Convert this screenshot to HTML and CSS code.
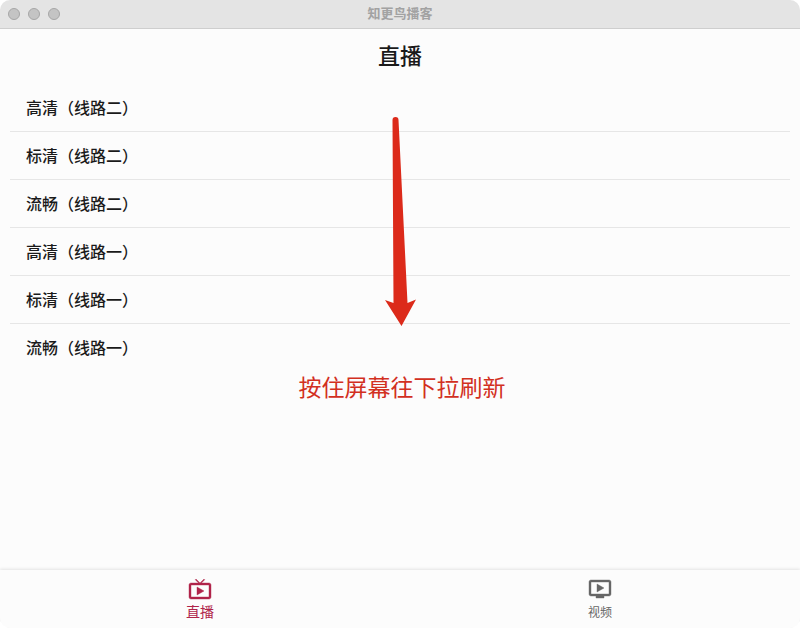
FILE: index.html
```html
<!DOCTYPE html>
<html lang="zh-CN">
<head>
  <meta charset="UTF-8">
  <meta name="viewport" content="width=device-width, initial-scale=1">
  <title>知更鸟播客</title>
  <link rel="stylesheet" href="styles.css">
</head>
<body>

  <div class="window">
    <header class="titlebar">
      <div class="window-buttons">
        <button type="button" class="dot" aria-label="关闭"></button>
        <button type="button" class="dot" aria-label="最小化"></button>
        <button type="button" class="dot" aria-label="缩放"></button>
      </div>
      <span class="window-title">知更鸟播客</span>
    </header>

    <main class="content">
      <h1 class="page-title">直播</h1>

      <ul class="channel-list">
        <li><a href="#" class="channel">高清（线路二）</a></li>
        <li><a href="#" class="channel">标清（线路二）</a></li>
        <li><a href="#" class="channel">流畅（线路二）</a></li>
        <li><a href="#" class="channel">高清（线路一）</a></li>
        <li><a href="#" class="channel">标清（线路一）</a></li>
        <li><a href="#" class="channel">流畅（线路一）</a></li>
      </ul>

      <svg class="pull-arrow" viewBox="0 0 32 210" aria-hidden="true">
        <path d="M8.500 4 Q8.500 1 11.500 1 Q14.500 1 14.500 4 L23.500 187 L32 183.500 L17.500 210 L1 184 L9.500 187 Z"/>
      </svg>
      <p class="pull-hint">按住屏幕往下拉刷新</p>
    </main>

    <nav class="tabbar">
      <a href="#" class="tab active">
        <svg class="tab-icon" viewBox="0 0 24 24" aria-hidden="true">
          <path d="M21 6h-7.590l3.290-3.290L16 2l-4 4-4-4-.71.71L10.590 6H3c-1.100 0-2 .89-2 2v12c0 1.100.9 2 2 2h18c1.100 0 2-.9 2-2V8c0-1.110-.9-2-2-2zm0 14H3V8h18v12zM9 10v8l7-4z"/>
        </svg>
        <span class="tab-label">直播</span>
      </a>
      <a href="#" class="tab">
        <svg class="tab-icon" viewBox="0 0 24 24" aria-hidden="true">
          <path d="M21 3H3c-1.110 0-2 .89-2 2v12c0 1.100.89 2 2 2h5v2h8v-2h5c1.100 0 1.990-.9 1.990-2L23 5c0-1.100-.9-2-2-2zm0 14H3V5h18v12zm-5-6l-7 4V7z"/>
        </svg>
        <span class="tab-label">视频</span>
      </a>
    </nav>
  </div>

</body>
</html>
```

FILE: styles.css
```css
* {
  box-sizing: border-box;
}

html, body {
  margin: 0;
  padding: 0;
  background: #fff;
  font-family: "Noto Sans CJK SC", "Noto Sans", sans-serif;
}

a {
  color: inherit;
  text-decoration: none;
}

.window {
  display: flex;
  flex-direction: column;
  min-height: 100vh;
  background: #fcfcfc;
  border-radius: 10px;
  overflow: hidden;
}

/* title bar */
.titlebar {
  display: grid;
  grid-template-columns: 1fr auto 1fr;
  align-items: center;
  height: 29px;
  padding: 0 8px;
  background: #e4e4e4;
  border-bottom: 1px solid #cecece;
}
.window-buttons {
  display: flex;
  gap: 8px;
}
.dot {
  width: 12px;
  height: 12px;
  padding: 0;
  border: 1px solid #a6a6a6;
  border-radius: 50%;
  background: #c4c4c4;
}
.window-title {
  padding-bottom: 2px;
  font-size: 13px;
  line-height: 20px;
  font-weight: 700;
  color: #a2a2a2;
}

/* channel list */
.content {
  position: relative;
  flex: 1;
}
.page-title {
  margin: 0;
  padding: 9px 0 14px;
  font-size: 22px;
  line-height: 32px;
  font-weight: 500;
  text-align: center;
  color: #1a1a1a;
}
.channel-list {
  list-style: none;
  margin: 0;
  padding: 0 10px;
}
.channel-list li + li {
  border-top: 1px solid #e6e6e6;
}
.channel {
  display: block;
  padding: 12px 16px;
  font-size: 16px;
  line-height: 23px;
  font-weight: 500;
  color: #1a1a1a;
}

/* pull to refresh */
.pull-arrow {
  position: absolute;
  top: 87px;
  left: 50%;
  width: 32px;
  height: 210px;
  margin-left: -16px;
  fill: #dc2a1a;
}
.pull-hint {
  margin: 0;
  padding-left: 4px;
  font-size: 23px;
  line-height: 30px;
  text-align: center;
  color: #d2301f;
}

/* bottom tabs */
.tabbar {
  display: flex;
  height: 58px;
  background: #fcfcfc;
  box-shadow: 0 -1px 3px rgba(0, 0, 0, 0.1);
}
.tab {
  flex: 1;
  display: flex;
  flex-direction: column;
  align-items: center;
  padding-top: 7px;
  font-size: 12px;
  line-height: 22px;
  color: #666;
}
.tab.active {
  font-size: 14px;
  line-height: 20px;
  color: #b0244a;
}
.tab-icon {
  width: 24px;
  height: 24px;
  fill: currentColor;
  stroke: currentColor;
  stroke-width: 0.4;
}
```
